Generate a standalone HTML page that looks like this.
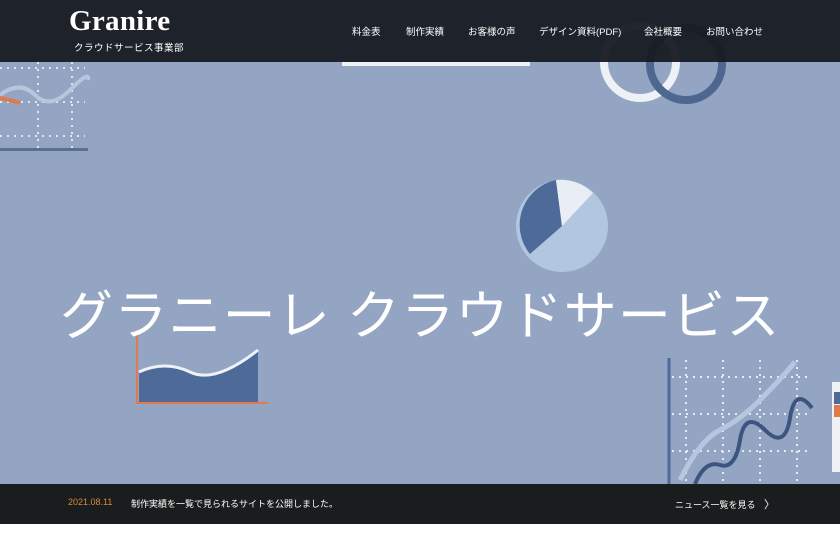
<!DOCTYPE html>
<html><head><meta charset="utf-8"><style>
*{margin:0;padding:0;box-sizing:border-box}
body{width:840px;height:538px;overflow:hidden;background:#fff;font-family:"Liberation Sans","Noto Sans CJK JP",sans-serif;position:relative}
.hero{position:absolute;left:0;top:0;width:840px;height:484px;background:#93a5c3;overflow:hidden}
.hdr{position:absolute;left:0;top:0;width:840px;height:62px;background:rgba(22,25,32,.94)}
.logo{position:absolute;left:69px;top:5px;color:#fff;font-family:"Liberation Serif",serif;font-size:29px;font-weight:bold;letter-spacing:0.3px}
.sub{position:absolute;left:74px;top:40px;color:#fff;font-size:9.5px;letter-spacing:0.5px}
.nav{position:absolute;top:24px;color:#fff;font-size:9.5px}
.title{position:absolute;left:60px;top:274px;color:#fff;font-size:53px;font-weight:normal;letter-spacing:1.2px;white-space:nowrap}
.news{position:absolute;left:0;top:484px;width:840px;height:40px;background:#191d1d;color:#fff;font-size:9px}
</style></head><body>
<div class="hero">
<svg width="840" height="484" style="position:absolute;left:0;top:0">
 <g stroke="#dfe6f0" stroke-width="2" stroke-dasharray="2 5" fill="none">
  <line x1="0" y1="68" x2="85" y2="68"/><line x1="0" y1="102" x2="85" y2="102"/><line x1="0" y1="136" x2="85" y2="136"/>
  <line x1="38" y1="62" x2="38" y2="150"/><line x1="72" y1="62" x2="72" y2="150"/>
 </g>
 <path d="M0 95 Q20 80 35 95 T70 90 T88 80" stroke="#b6c6dc" stroke-width="4" fill="none"/>
 <path d="M0 98 Q10 100 20 103" stroke="#e07a4a" stroke-width="4" fill="none"/>
 <rect x="0" y="148" width="88" height="3" fill="#5b6f93"/>
 <rect x="342" y="62" width="188" height="4" fill="#eef2f7"/>
 <circle cx="640" cy="62" r="36" stroke="#eef2f7" stroke-width="8" fill="none"/>
 <circle cx="686" cy="64" r="36" stroke="#4d6790" stroke-width="8" fill="none"/>
 <circle cx="562" cy="226" r="46" fill="#b3c6df"/>
 <path d="M562 226 L530 254 A46 46 0 0 1 556 180 Z" fill="#4d6a98"/>
 <path d="M562 226 L556 180 A46 46 0 0 1 593 193 Z" fill="#e9eef5"/>
 <path d="M137 335 L137 403 L268 403" stroke="#e07a4a" stroke-width="2" fill="none"/>
 <path d="M139 402 L139 372 Q165 360 190 372 T258 350 L258 402 Z" fill="#4d6a98"/>
 <path d="M139 372 Q165 360 190 372 T258 350" stroke="#eef2f7" stroke-width="3" fill="none"/>
 <line x1="669" y1="358" x2="669" y2="484" stroke="#4d6a98" stroke-width="3"/>
 <g stroke="#e6ecf4" stroke-width="2" stroke-dasharray="2 5" fill="none">
  <line x1="672" y1="377" x2="812" y2="377"/><line x1="672" y1="414" x2="812" y2="414"/><line x1="672" y1="451" x2="812" y2="451"/>
  <line x1="686" y1="360" x2="686" y2="484"/><line x1="723" y1="360" x2="723" y2="484"/><line x1="760" y1="360" x2="760" y2="484"/><line x1="797" y1="360" x2="797" y2="484"/>
 </g>
 <path d="M680 480 Q700 440 720 430 T760 400 T795 362" stroke="#b5c7df" stroke-width="5" fill="none"/>
 <path d="M695 484 Q705 460 720 465 T740 440 T765 430 T790 418 T812 408" stroke="#3c5580" stroke-width="4" fill="none"/>
 <rect x="832" y="382" width="8" height="90" fill="#eef2f7"/>
 <rect x="834" y="392" width="6" height="12" fill="#4d6a98"/>
 <rect x="834" y="405" width="6" height="12" fill="#e07a4a"/>
</svg>
<div class="title">グラニーレ クラウドサービス</div>
</div>
<div class="hdr">
 <div class="logo">Granire</div>
 <div class="sub">クラウドサービス事業部</div>
 <div class="nav" style="left:352px">料金表</div>
 <div class="nav" style="left:406px">制作実績</div>
 <div class="nav" style="left:468px">お客様の声</div>
 <div class="nav" style="left:539px">デザイン資料(PDF)</div>
 <div class="nav" style="left:644px">会社概要</div>
 <div class="nav" style="left:706px">お問い合わせ</div>
</div>
<div class="news">
 <span style="position:absolute;left:68px;top:13px;color:#d98a3a">2021.08.11</span>
 <span style="position:absolute;left:131px;top:13px">制作実績を一覧で見られるサイトを公開しました。</span>
 <span style="position:absolute;left:675px;top:14px">ニュース一覧を見る</span>
 <span style="position:absolute;left:764px;top:12px;font-size:11px">〉</span>
</div>
</body></html>
